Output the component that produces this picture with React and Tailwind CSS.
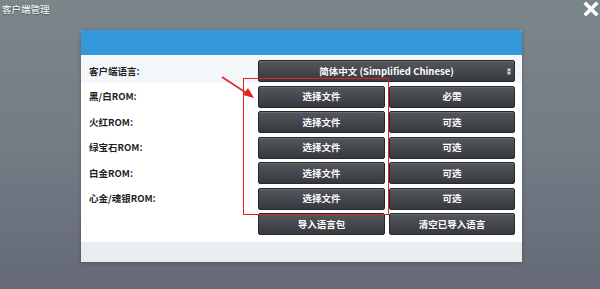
import React from 'react';

const font = { fontFamily: '"Noto Sans CJK SC", "Noto Sans", sans-serif' };

function Btn({ children, className = '' }) {
  return (
    <div className={`h-[22px] flex items-center justify-center rounded-[2px] border border-[#26292c] bg-gradient-to-b from-[#54575c] to-[#36393d] text-white text-[9.5px] font-bold shadow-[inset_0_1px_0_rgba(255,255,255,0.12)] ${className}`}>
      {children}
    </div>
  );
}

function Row({ label, a, b }) {
  return (
    <div className="h-[25.5px] flex items-end pb-[1px] pl-[8px] pr-[7px]">
      <div className="w-[169px] self-center pt-[2px] text-[9.5px] font-bold text-[#1f1f1f]">{label}</div>
      <Btn className="w-[127px]">{a}</Btn>
      <Btn className="w-[126px] ml-[4px]">{b}</Btn>
    </div>
  );
}

export default function App() {
  const rows = [
    ['黑/白ROM:', '选择文件', '必需'],
    ['火红ROM:', '选择文件', '可选'],
    ['绿宝石ROM:', '选择文件', '可选'],
    ['白金ROM:', '选择文件', '可选'],
    ['心金/魂银ROM:', '选择文件', '可选'],
    ['', '导入语言包', '清空已导入语言'],
  ];

  return (
    <div className="relative w-[600px] h-[289px] overflow-hidden bg-gradient-to-b from-[#7b868b] via-[#747c85] to-[#656977]" style={font}>
      {/* title bar */}
      <div className="h-[30px] flex items-start justify-between">
        <div className="pl-[2px] pt-[2px] text-[9.5px] text-white [text-shadow:0_1px_1px_rgba(0,0,0,0.4)]">客户端管理</div>
        <svg width="16" height="16" viewBox="0 0 16 16" className="mr-[1px] mt-[1px]">
          <path d="M3 3 L13 13 M13 3 L3 13" stroke="#fff" strokeWidth="3.6" strokeLinecap="square" />
        </svg>
      </div>

      {/* panel */}
      <div className="ml-[81px] w-[441px] bg-white rounded-t-[2px] shadow-[0_1px_4px_rgba(0,0,0,0.25)]">
        <div className="h-[25px] bg-[#3598db] rounded-t-[2px]" />
        <div className="h-[28px] flex items-center pt-[4px] pl-[8px] pr-[7px] bg-[#f4f7fa]">
          <div className="w-[169px] text-[9.5px] font-bold text-[#1f1f1f]">客户端语言:</div>
          <Btn className="w-[257px] relative">
            简体中文 (Simplified Chinese)
            <svg width="4" height="7" viewBox="0 0 4 7" className="absolute right-[3px] top-[7px]">
              <rect x="0.5" y="0.5" width="3" height="6" fill="#c9ccd0" />
              <line x1="0.5" y1="3.5" x2="3.5" y2="3.5" stroke="#55585d" strokeWidth="0.8" />
            </svg>
          </Btn>
        </div>
        {rows.map((r, i) => (
          <Row key={i} label={r[0]} a={r[1]} b={r[2]} />
        ))}
        <div className="mt-[6px] h-[20px] bg-[#eaedef]" />
      </div>

      {/* annotation */}
      <div className="absolute left-[243px] top-[78px] w-[146px] h-[137px] border-[1.5px] border-[#e8211c]" />
      <svg className="absolute left-0 top-0" width="600" height="289">
        <line x1="222" y1="77" x2="248" y2="94" stroke="#e8211c" strokeWidth="1.5" />
        <polygon points="254,98 243,95 248,88" fill="#e8211c" />
      </svg>
    </div>
  );
}
